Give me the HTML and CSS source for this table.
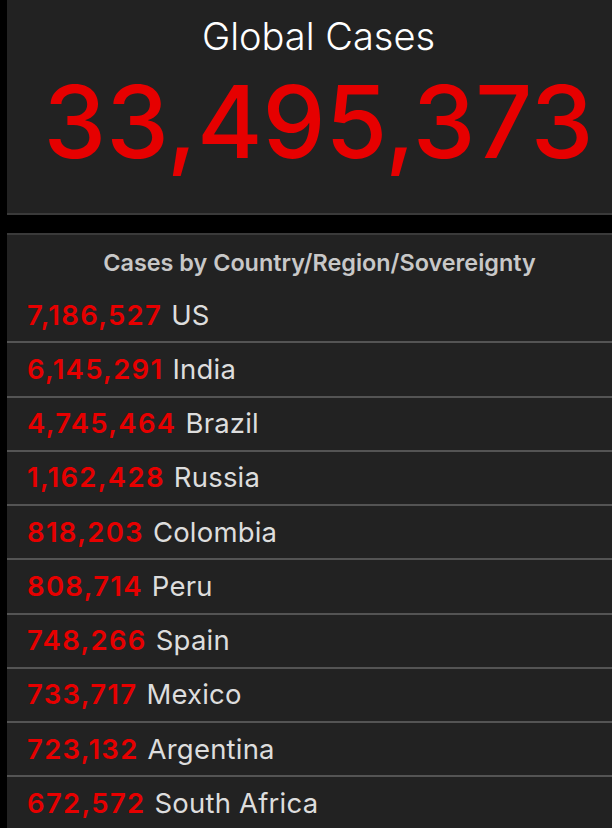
FILE: index.html
```html
<!DOCTYPE html>
<html>
<head>
<meta charset="utf-8">
<link rel="stylesheet" href="styles.css">
</head>
<body>
<div class="page">
  <section class="panel total">
    <div class="total-title">Global Cases</div>
    <div class="total-value">33,495,373</div>
  </section>
  <section class="panel list">
    <div class="list-title">Cases by Country/Region/Sovereignty</div>
    <div class="row"><span class="num">7,186,527</span> <span class="name">US</span></div>
    <div class="row"><span class="num">6,145,291</span> <span class="name">India</span></div>
    <div class="row"><span class="num">4,745,464</span> <span class="name">Brazil</span></div>
    <div class="row"><span class="num">1,162,428</span> <span class="name">Russia</span></div>
    <div class="row"><span class="num">818,203</span> <span class="name">Colombia</span></div>
    <div class="row"><span class="num">808,714</span> <span class="name">Peru</span></div>
    <div class="row"><span class="num">748,266</span> <span class="name">Spain</span></div>
    <div class="row"><span class="num">733,717</span> <span class="name">Mexico</span></div>
    <div class="row"><span class="num">723,132</span> <span class="name">Argentina</span></div>
    <div class="row"><span class="num">672,572</span> <span class="name">South Africa</span></div>
  </section>
</div>
</body>
</html>
```
FILE: styles.css
```css
html, body {
  margin: 0;
  padding: 0;
  background: #000;
  height: 828px;
  overflow: hidden;
}
.page {
  padding-left: 7px;
  display: flex;
  flex-direction: column;
  gap: 18px;
}
.panel {
  background: #222;
}
.total {
  box-sizing: border-box;
  height: 215px;
  padding-left: 18px;
  border-bottom: 2px solid #3a3a3a;
  display: flex;
  flex-direction: column;
  align-items: center;
  font-family: Inter, Lato, sans-serif;
}
.total-title {
  color: #fff;
  font-weight: 300;
  font-size: 38px;
  line-height: 1;
  margin-top: 17px;
}
.total-value {
  color: #e60000;
  font-weight: 500;
  font-size: 100px;
  line-height: 1;
  margin-top: 17px;
}
.list {
  border-top: 2px solid #3a3a3a;
  font-family: Inter, "Open Sans", sans-serif;
}
.list-title {
  color: #c8c8c8;
  font-weight: 600;
  font-size: 23.4px;
  height: 54px;
  padding-left: 20px;
  display: flex;
  align-items: center;
  justify-content: center;
}
.row {
  box-sizing: border-box;
  height: 54.25px;
  border-bottom: 2px solid #545454;
  display: flex;
  align-items: center;
  padding-left: 20px;
  padding-bottom: 1px;
  font-size: 27.5px;
  gap: 9px;
}
.num { color: #e60000; font-weight: 600; letter-spacing: 1.3px; }
.name { color: #ddd; font-weight: 400; letter-spacing: 0.2px; }
```
